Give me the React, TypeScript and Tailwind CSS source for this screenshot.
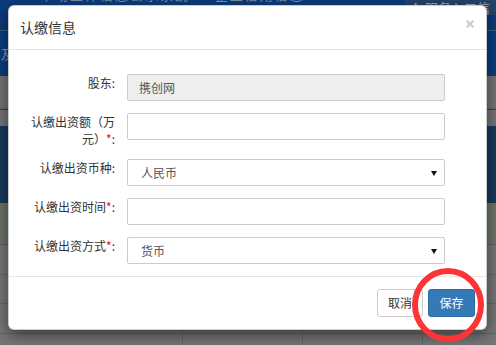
import React from "react";

const font = { fontFamily: '"Noto Sans CJK SC", "Noto Sans", sans-serif' };

function Label({ children, req }: { children: React.ReactNode; req?: boolean }) {
  return (
    <div className="w-[106px] shrink-0 pl-[18px] text-right text-[12px] leading-[17px] text-[#333]">
      {children}
      {req && <span className="text-[#ff0000]">*</span>}
      <span>:</span>
    </div>
  );
}

function Arrow() {
  return (
    <svg width="6" height="5" viewBox="0 0 6 5" className="absolute right-[7px] top-[11px]">
      <path d="M0 0 L6 0 L3 5 Z" fill="#111" />
    </svg>
  );
}

export default function App() {
  return (
    <div className="relative w-[496px] h-[345px] overflow-hidden bg-[#767676]" style={font}>
      {/* darkened page behind the dialog */}
      <div className="flex flex-col w-full">
        <div className="h-[30px] bg-[#0b3c7b] flex justify-between">
          <div className="pl-[40px] -mt-[15px] text-[13px] leading-[20px] text-[#7d8ca2] tracking-[2px]">市场主体信息公示系统 · 企业信用信息</div>
          <div className="w-[91px] h-[15px] bg-[#24446a] text-[13px] leading-[15px] text-[#9aa6b6] pl-[4px] overflow-hidden whitespace-nowrap">▲ 服务入口信</div>
        </div>
        <div className="h-px bg-[#3d5c82]" />
        <div className="h-[45px] bg-[#0b3d7c] pl-[1px] text-[13px] leading-[45px] text-[#8d99aa]">及</div>
        <div className="h-[33px] bg-[#747474] border-b border-[#6a6a6a]" />
        <div className="h-px bg-[#25466d]" />
        <div className="h-[16px] bg-[#747474]" />
        <div className="h-[77px] bg-[#173a5d]" />
        <div className="h-[42px] bg-[#6d7565] border-b border-[#626262]" />
        <div className="h-[30px] border-b border-[#666]" />
        <div className="h-[29px] border-b border-[#666]" />
        <div className="h-[30px] border-b border-[#666] flex">
          <div className="w-[183px] border-r border-[#666]" />
          <div className="w-[120px] border-r border-[#666]" />
          <div className="w-[120px] border-r border-[#666]" />
        </div>
        <div className="h-[20px] flex">
          <div className="w-[183px] border-r border-[#666]" />
          <div className="w-[120px] border-r border-[#666]" />
          <div className="w-[120px] border-r border-[#666]" />
        </div>
      </div>

      {/* dialog */}
      <div className="absolute left-[8px] top-[5px] w-[479px] bg-white border border-black/20 rounded-[6px] shadow-[0_5px_15px_rgba(0,0,0,0.5)] flex flex-col">
        <div className="h-[44px] border-b border-[#e5e5e5] flex justify-between pl-[11px] pr-[12px]">
          <div className="self-center text-[14px] leading-[20px] text-[#333] mt-[-1px]">认缴信息</div>
          <svg width="8" height="8" viewBox="0 0 8 8" className="mt-[14px]">
            <path d="M0.8 0.8 L7.2 7.2 M7.2 0.8 L0.8 7.2" stroke="#cdcdcd" strokeWidth="2.2" />
          </svg>
        </div>

        <div className="pt-[24px] pb-[12px] flex flex-col gap-[12px]">
          <div className="flex items-start gap-[12px]">
            <Label>股东</Label>
            <div className="w-[318px] h-[27px] border border-[#ccc] bg-[#eeeeee] rounded-[2px] pl-[11px] text-[12px] leading-[25px] text-[#555]">携创网</div>
          </div>
          <div className="flex items-start gap-[12px]">
            <Label req>认缴出资额（万元）</Label>
            <div className="w-[318px] h-[27px] border border-[#ccc] bg-white rounded-[2px]" />
          </div>
          <div className="flex items-start gap-[12px]">
            <Label>认缴出资币种</Label>
            <div className="relative w-[318px] h-[27px] border border-[#ccc] bg-white rounded-[2px] pl-[13px] text-[12px] leading-[25px] text-[#555]">
              人民币
              <Arrow />
            </div>
          </div>
          <div className="flex items-start gap-[12px]">
            <Label req>认缴出资时间</Label>
            <div className="w-[318px] h-[27px] border border-[#ccc] bg-white rounded-[2px]" />
          </div>
          <div className="flex items-start gap-[12px]">
            <Label req>认缴出资方式</Label>
            <div className="relative w-[318px] h-[27px] border border-[#ccc] bg-white rounded-[2px] pl-[13px] text-[12px] leading-[25px] text-[#555]">
              货币
              <Arrow />
            </div>
          </div>
        </div>

        <div className="border-t border-[#e5e5e5] pt-[12px] pb-[12px] pr-[11px] flex justify-end gap-[5px]">
          <button className="h-[28px] w-[46px] border border-[#ccc] bg-white rounded-[3px] text-[12px] text-[#333]">取消</button>
          <button className="h-[28px] w-[47px] border border-[#2e6da4] bg-[#337ab7] rounded-[3px] text-[12px] text-white">保存</button>
        </div>
      </div>

      {/* red annotation circle */}
      <svg className="absolute left-0 top-0 pointer-events-none" width="496" height="345">
        <ellipse cx="448" cy="305" rx="33" ry="34" fill="none" stroke="#fb3535" strokeWidth="6" />
      </svg>
    </div>
  );
}
